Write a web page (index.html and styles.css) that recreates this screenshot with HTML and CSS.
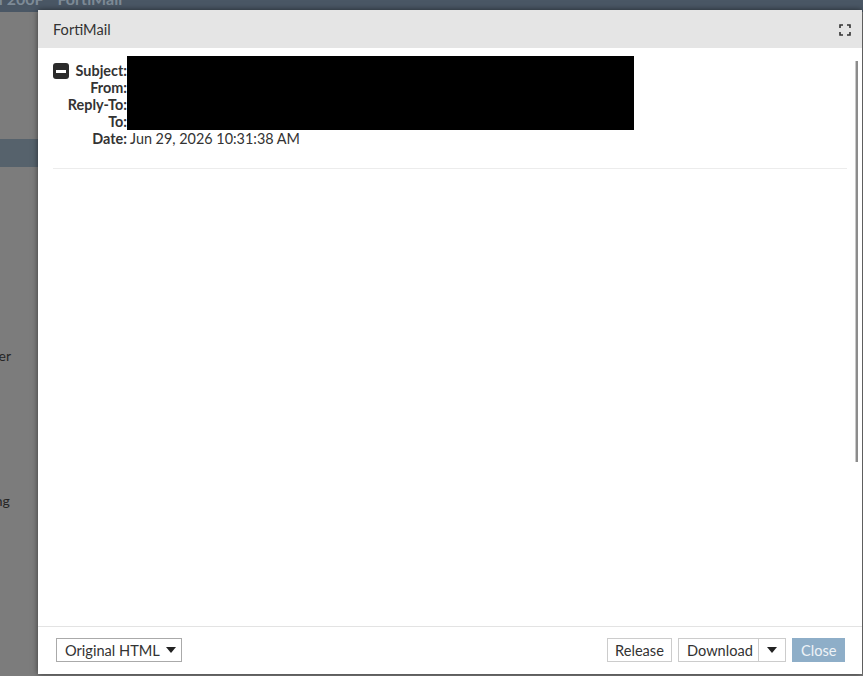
FILE: index.html
```html
<!DOCTYPE html>
<html lang="en">
<head>
  <meta charset="UTF-8">
  <title>FortiMail</title>
  <link rel="stylesheet" href="styles.css">
</head>
<body>
  <!-- page behind the modal (dimmed) -->
  <div class="page">
    <div class="topbar">
      <span class="product">FortiMail 200F</span>
      <span class="product-name">FortiMail</span>
    </div>
    <div class="sidebar">
      <div class="nav-gap"></div>
      <div class="nav-item nav-active"></div>
      <div class="nav-block"></div>
      <div class="nav-item nav-text nav-sender">Sender</div>
      <div class="nav-item nav-text nav-routing">Routing</div>
    </div>
  </div>

  <!-- Message preview dialog -->
  <div class="dialog">
    <div class="dialog-header">
      <span class="dialog-title">FortiMail</span>
      <svg class="expand-icon" width="12" height="12" viewBox="0 0 12 12">
        <path d="M1 4V1h3M8 1h3v3M11 8v3H8M4 11H1V8" fill="none" stroke="#333" stroke-width="1.6"/>
      </svg>
    </div>

    <div class="dialog-body">
      <div class="headers">
        <span class="toggle"><span class="toggle-bar"></span></span>
        <span class="label">Subject:</span>
        <span class="value"></span>

        <span></span>
        <span class="label">From:</span>
        <span class="value"></span>

        <span></span>
        <span class="label">Reply-To:</span>
        <span class="value"></span>

        <span></span>
        <span class="label">To:</span>
        <span class="value"></span>

        <span></span>
        <span class="label">Date:</span>
        <span class="value">Jun 29, 2026 10:31:38 AM</span>
      </div>
      <div class="redacted"></div>
      <div class="separator"></div>
      <div class="scroll-thumb"></div>
    </div>

    <div class="dialog-footer">
      <div class="select">
        <span>Original HTML</span>
        <span class="caret"></span>
      </div>
      <div class="actions">
        <button class="btn btn-release">Release</button>
        <div class="split">
          <button class="btn split-main">Download</button>
          <button class="btn split-toggle"><span class="caret"></span></button>
        </div>
        <button class="btn btn-primary" disabled>Close</button>
      </div>
    </div>
  </div>
</body>
</html>
```

FILE: styles.css
```css
body {
  margin: 0;
  font-family: Lato, "Open Sans", sans-serif;
  font-size: 14.4px;
  color: #333;
  background: #7c7c7c;
  height: 676px;
  overflow: hidden;
}

/* Dimmed page behind the modal */
.page {
  width: 100%;
}

.topbar {
  height: 12px;
  background: #4a5765;
  overflow: hidden;
  white-space: nowrap;
  font-size: 16px;
  font-weight: bold;
  color: #7e8b97;
  line-height: 12px;
}

.topbar span {
  display: inline-block;
  margin-top: -7px;
  vertical-align: top;
}

.product {
  margin-left: -62px;
}

.product-name {
  margin-left: 10px;
}

.sidebar {
  width: 38px;
  overflow: hidden;
  white-space: nowrap;
}

.nav-gap {
  height: 127px;
}

.nav-item {
  height: 28px;
}

.nav-active {
  background: #56626c;
}

.nav-block {
  height: 175px;
}

.nav-text {
  font-size: 14px;
  color: #262626;
  line-height: 28px;
}

.nav-sender {
  margin-left: -32px;
}

.nav-routing {
  margin-left: -38px;
  margin-top: 117px;
}

/* Dialog */
.dialog {
  position: absolute;
  left: 38px;
  top: 10px;
  width: 824px;
  height: 664px;
  background: #fff;
  box-shadow: 0 0 6px rgba(0, 0, 0, 0.55);
  display: flex;
  flex-direction: column;
}

.dialog-header {
  height: 38px;
  flex: none;
  background: #e5e5e5;
  display: flex;
  align-items: center;
  justify-content: space-between;
  padding: 0 11px 0 15px;
}

.dialog-title {
  font-size: 14.6px;
  color: #333;
  margin-top: 1px;
}

.expand-icon {
  margin-top: 1px;
}

.dialog-body {
  flex: 1;
  position: relative;
  padding: 14px 15px 0 15px;
  overflow: hidden;
}

.headers {
  display: grid;
  grid-template-columns: 14px 60px 1fr;
  grid-auto-rows: 17px;
  line-height: 17px;
  white-space: nowrap;
}

.toggle {
  width: 16px;
  height: 16px;
  margin-top: 1px;
  background: #2b2b2b;
  border-radius: 3px;
  display: flex;
  align-items: center;
  justify-content: center;
}

.toggle-bar {
  width: 10px;
  height: 3px;
  background: #fff;
}

.label {
  font-weight: bold;
  text-align: right;
}

.value {
  padding-left: 3px;
}

/* redaction over the header values */
.redacted {
  position: absolute;
  left: 89px;
  top: 8px;
  width: 507px;
  height: 74px;
  background: #000;
}

.separator {
  height: 1px;
  background: #ececec;
  margin-top: 21px;
}

.scroll-thumb {
  position: absolute;
  right: 4px;
  top: 13px;
  width: 2px;
  height: 401px;
  background: #8c8c8c;
  border-left: 1px solid #c9c9c9;
}

.dialog-footer {
  height: 48px;
  box-sizing: border-box;
  flex: none;
  border-top: 1px solid #e3e3e3;
  display: flex;
  justify-content: space-between;
  align-items: flex-start;
  padding: 11px 17px 0 18px;
}

.select {
  border: 1px solid #aaa;
  display: flex;
  align-items: center;
  justify-content: space-between;
  padding: 0 5px 0 8px;
  box-sizing: border-box;
  width: 126px;
  height: 24px;
  font-size: 14.6px;
}

.caret {
  width: 0;
  height: 0;
  border-left: 5px solid transparent;
  border-right: 5px solid transparent;
  border-top: 6px solid #222;
}

.actions {
  display: flex;
  gap: 6px;
}

.btn {
  height: 24px;
  border: 1px solid #ccc;
  background: #fff;
  font-family: Lato, "Open Sans", sans-serif;
  font-size: 14.6px;
  color: #333;
  padding: 0 8px;
  margin: 0;
}

.btn-release {
  width: 65px;
  padding: 0;
}

.split {
  display: flex;
}

.split-main {
  width: 81px;
}

.split-toggle {
  width: 27px;
  border-left: none;
  display: flex;
  align-items: center;
  justify-content: center;
}

.btn-primary {
  background: #8eaec8;
  border-color: #8eaec8;
  color: #eef3f7;
  width: 53px;
}
```
